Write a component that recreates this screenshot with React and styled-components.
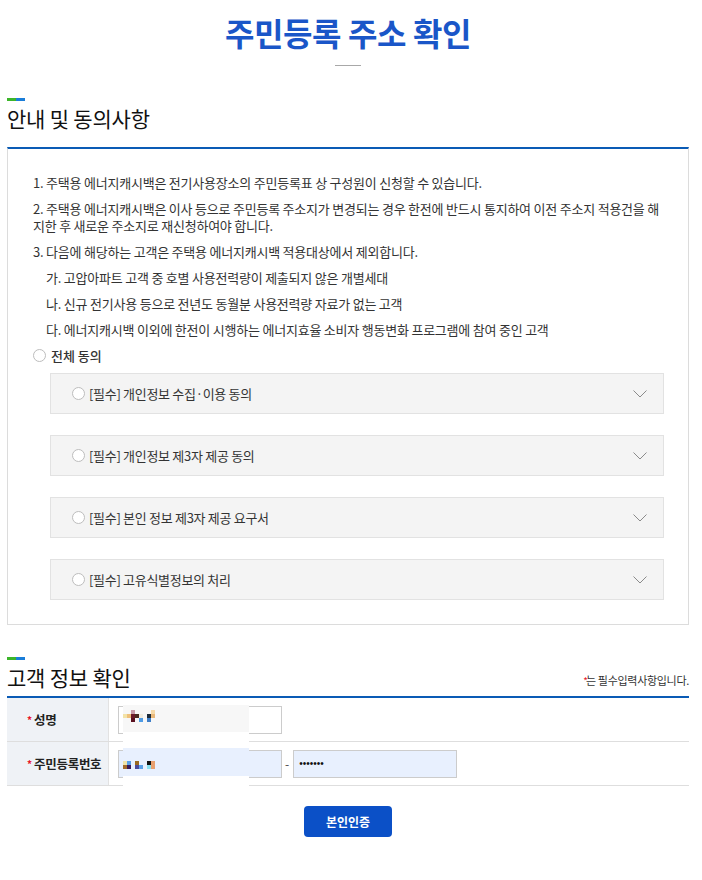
import React from 'react'
import styled, { createGlobalStyle } from 'styled-components'

const GlobalStyle = createGlobalStyle`
  body {
    margin: 0;
    background: #fff;
    font-family: "Noto Sans CJK KR", "Noto Sans", sans-serif;
    color: #333;
  }
`

const notices = [
  { text: '1. 주택용 에너지캐시백은 전기사용장소의 주민등록표 상 구성원이 신청할 수 있습니다.' },
  { text: '2. 주택용 에너지캐시백은 이사 등으로 주민등록 주소지가 변경되는 경우 한전에 반드시 통지하여 이전 주소지 적용건을 해지한 후 새로운 주소지로 재신청하여야 합니다.' },
  { text: '3. 다음에 해당하는 고객은 주택용 에너지캐시백 적용대상에서 제외합니다.' },
  { text: '가. 고압아파트 고객 중 호별 사용전력량이 제출되지 않은 개별세대', sub: true },
  { text: '나. 신규 전기사용 등으로 전년도 동월분 사용전력량 자료가 없는 고객', sub: true },
  { text: '다. 에너지캐시백 이외에 한전이 시행하는 에너지효율 소비자 행동변화 프로그램에 참여 중인 고객', sub: true },
]

const terms = [
  '[필수] 개인정보 수집·이용 동의',
  '[필수] 개인정보 제3자 제공 동의',
  '[필수] 본인 정보 제3자 제공 요구서',
  '[필수] 고유식별정보의 처리',
]

const nameBlobs = [
  [0, 8, 4, 4, '#f3e3a8'], [4, 8, 4, 4, '#efc07a'], [8, 4, 4, 4, '#c79aa8'],
  [8, 8, 4, 4, '#6b1a2a'], [12, 8, 4, 4, '#4a2a20'], [8, 12, 4, 4, '#5a1020'],
  [16, 8, 4, 4, '#f1ece0'], [16, 12, 4, 4, '#4d9be6'], [24, 8, 4, 4, '#1b2a3a'],
  [24, 12, 4, 4, '#3f7fc8'], [28, 4, 4, 4, '#f6d9a8'], [28, 8, 4, 4, '#e9b87a'],
]

const idBlobs = [
  [0, 12, 4, 4, '#efe3a8'], [4, 12, 4, 4, '#5aa0e8'], [0, 16, 4, 4, '#a26a2a'],
  [4, 16, 4, 4, '#3a1a5a'], [12, 12, 4, 4, '#9a6a20'], [12, 16, 4, 4, '#4a4a9a'],
  [16, 16, 4, 4, '#5aa0e8'], [24, 12, 4, 4, '#111'], [24, 16, 4, 4, '#8ae0f0'],
  [28, 12, 4, 8, '#e8a070'],
]

function Radio() {
  return <RadioCircle />
}

function Chevron() {
  return (
    <svg width="14" height="8" viewBox="0 0 14 8">
      <polyline points="0.5,0.5 7,7 13.5,0.5" fill="none" stroke="#8a8a8a" strokeWidth="1" />
    </svg>
  )
}

function Mosaic({ blobs }) {
  return (
    <svg width="34" height="24" viewBox="0 0 34 24">
      {blobs.map(([x, y, w, h, c], i) => (
        <rect key={i} x={x} y={y} width={w} height={h} fill={c} />
      ))}
    </svg>
  )
}

function App() {
  return (
    <Page>
      <GlobalStyle />
      <Title>주민등록 주소 확인</Title>
      <TitleRule />

      <SectionHead>
        <Bar />
        <HeadRow>
          <Heading>안내 및 동의사항</Heading>
        </HeadRow>
      </SectionHead>
      <AgreeBox>
        {notices.map((n, i) => (
          <Notice key={i} sub={n.sub}>{n.text}</Notice>
        ))}
        <AllAgree>
          <Radio />
          <span>전체 동의</span>
        </AllAgree>
        <TermList>
          {terms.map((t) => (
            <Term key={t}>
              <TermLabel>
                <Radio />
                <span>{t}</span>
              </TermLabel>
              <Chevron />
            </Term>
          ))}
        </TermList>
      </AgreeBox>

      <SectionHead>
        <Bar />
        <HeadRow second>
          <Heading>고객 정보 확인</Heading>
          <Required><Star tight>*</Star>는 필수입력사항입니다.</Required>
        </HeadRow>
      </SectionHead>
      <InfoTable>
        <Row>
          <Label><Star>*</Star>성명</Label>
          <Cell>
            <InputWrap>
              <Field />
              <Mask band="#f7f7f7" bandHeight={27} style={{ top: -1, height: 43 }}>
                <Mosaic blobs={nameBlobs} />
              </Mask>
            </InputWrap>
          </Cell>
        </Row>
        <Row>
          <Label><Star>*</Star>주민등록번호</Label>
          <Cell>
            <InputWrap>
              <Field filled />
              <Mask band="#e8f0fe" bandHeight={28} style={{ top: -2, height: 39 }}>
                <Mosaic blobs={idBlobs} />
              </Mask>
            </InputWrap>
            <Dash>-</Dash>
            <Field filled as="div">
              <Dots>•••••••</Dots>
            </Field>
          </Cell>
        </Row>
      </InfoTable>
      <Actions>
        <Button>본인인증</Button>
      </Actions>
    </Page>
  )
}

export default App

const Page = styled.div`
  width: 682px;
  margin-left: 7px;
  padding-top: 12px;
  padding-bottom: 40px;
`

const Title = styled.h1`
  margin: 0;
  text-align: center;
  font-size: 32px;
  line-height: 40px;
  font-weight: 700;
  color: #1a56c8;
  letter-spacing: -0.4px;
`

const TitleRule = styled.div`
  width: 26px;
  height: 1px;
  background: #a8a8a8;
  margin: 13px auto 0;
`

const SectionHead = styled.div`
  margin-top: 32px;
`

const Bar = styled.div`
  width: 18px;
  height: 3px;
  background: linear-gradient(to right, #3cb52a 50%, #1a7dd8 50%);
`

const HeadRow = styled.div`
  display: flex;
  align-items: flex-end;
  justify-content: space-between;
  margin-top: 3px;
  margin-bottom: ${p => (p.second ? '5px' : '15px')};
`

const Heading = styled.h2`
  margin: 0;
  font-size: 21px;
  line-height: 28px;
  font-weight: 400;
  color: #111;
  letter-spacing: -0.2px;
`

const Required = styled.div`
  font-size: 11px;
  line-height: 16px;
  color: #333;
  letter-spacing: -0.3px;
  margin-bottom: 2px;
`

const Star = styled.span`
  color: #e8152b;
  font-size: 10px;
  margin-right: ${p => (p.tight ? '0' : '2px')};
  letter-spacing: ${p => (p.tight ? '-2px' : '0')};
`

const AgreeBox = styled.div`
  border: 1px solid #dcdcdc;
  border-top: 2px solid #0a5bb5;
  padding: 25px 25px 24px;
`

const Notice = styled.div`
  font-size: 13px;
  line-height: 17px;
  letter-spacing: -0.22px;
  color: #333;
  margin-bottom: 9px;
  padding-left: ${p => (p.sub ? '13px' : '0')};
  word-break: break-all;
`

const RadioCircle = styled.span`
  display: inline-block;
  width: 13px;
  height: 13px;
  box-sizing: border-box;
  border: 1px solid #bdbdbd;
  border-radius: 50%;
  background: #fff;
  flex: none;
`

const AllAgree = styled.div`
  display: flex;
  align-items: center;
  gap: 5px;
  font-size: 13px;
  line-height: 17px;
  font-weight: 500;
  color: #333;
  margin-bottom: 9px;
`

const TermList = styled.div`
  display: flex;
  flex-direction: column;
  gap: 21px;
  margin-left: 17px;
  margin-right: -1px;
`

const Term = styled.div`
  height: 41px;
  box-sizing: border-box;
  display: flex;
  align-items: center;
  justify-content: space-between;
  padding: 0 16px 0 21px;
  border: 1px solid #e2e2e2;
  background: #f4f4f4;
`

const TermLabel = styled.div`
  display: flex;
  align-items: center;
  gap: 4px;
  font-size: 13px;
  color: #333;
  letter-spacing: -0.3px;
`

const InfoTable = styled.div`
  border-top: 2px solid #0a5bb5;
`

const Row = styled.div`
  display: grid;
  grid-template-columns: 102px 1fr;
  height: 44px;
  box-sizing: border-box;
  border-bottom: 1px solid #dedede;
`

const Label = styled.div`
  display: flex;
  align-items: center;
  padding-left: 20px;
  background: #eff2f6;
  border-right: 1px solid #e2e2e2;
  font-size: 12.5px;
  font-weight: 700;
  color: #222;
  letter-spacing: -0.3px;
`

const Cell = styled.div`
  display: flex;
  align-items: center;
  padding-left: 9px;
`

const InputWrap = styled.div`
  position: relative;
  display: flex;
`

const Field = styled.input`
  width: 164px;
  height: 28px;
  box-sizing: border-box;
  border: 1px solid #cccccc;
  background: ${p => (p.filled ? '#e8f0fe' : '#fff')};
  margin: 0;
  padding: 0;
  display: flex;
  align-items: center;
`

const Mask = styled.div`
  position: absolute;
  left: 5px;
  width: 126px;
  background: linear-gradient(to bottom, ${p => p.band} ${p => p.bandHeight}px, #fff ${p => p.bandHeight}px);
  svg {
    display: block;
    margin-top: 1px;
  }
`

const Dash = styled.span`
  font-size: 12px;
  color: #444;
  margin: 0 4px 0 3px;
`

const Dots = styled.span`
  padding-left: 5px;
  font-family: "Liberation Sans", sans-serif;
  font-size: 10px;
  color: #111;
`

const Actions = styled.div`
  display: flex;
  justify-content: center;
  margin-top: 20px;
`

const Button = styled.button`
  width: 88px;
  height: 31px;
  border: 0;
  border-radius: 4px;
  background: #0b50c7;
  color: #fff;
  font-family: "Noto Sans CJK KR", "Noto Sans", sans-serif;
  font-size: 12px;
  font-weight: 700;
  cursor: pointer;
`
